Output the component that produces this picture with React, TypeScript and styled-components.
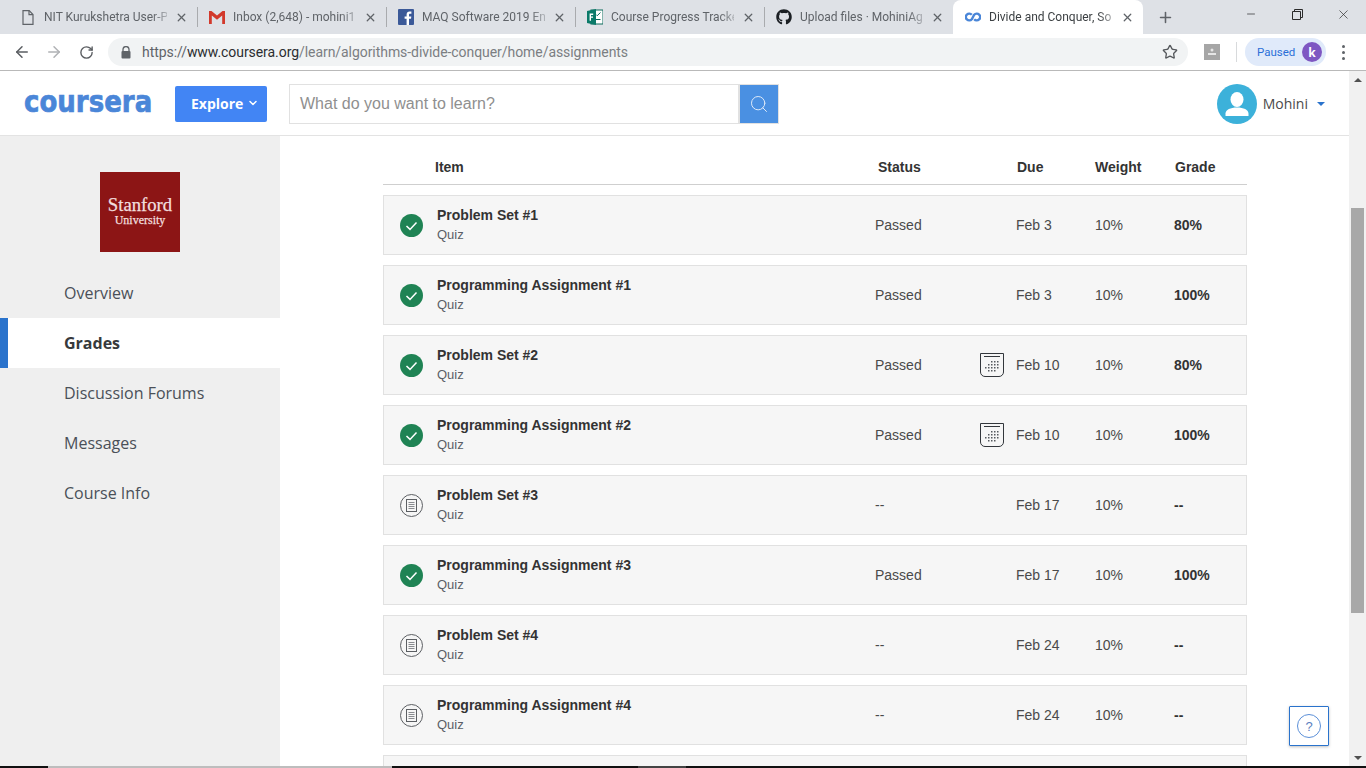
import { createGlobalStyle, styled } from 'styled-components';
import { ArrowLeft, ArrowRight, RotateCw, Star, X, Plus, Minus, Search, ChevronDown } from 'lucide-react';
import { FaGithub } from 'react-icons/fa';

const GlobalStyle = createGlobalStyle`
  html, body { margin: 0; padding: 0; height: 768px; overflow: hidden; background: #fff; }
  * { box-sizing: border-box; }
  #root { font-family: "Liberation Sans", Arial, sans-serif; }
`;

const Screen = styled.div`
  position: relative;
  width: 1366px;
  height: 768px;
  display: flex;
  flex-direction: column;
  overflow: hidden;
`;

/* browser chrome */
const TabStrip = styled.div`
  height: 34px;
  flex: none;
  background: #dee1e6;
  display: flex;
  padding-left: 8px;
`;
const Tab = styled.div<{ $active?: boolean; $last?: boolean }>`
  width: ${p => (p.$active ? 190 : 189)}px;
  height: 34px;
  flex: none;
  display: flex;
  align-items: center;
  padding: 0 9px 0 12px;
  background: ${p => (p.$active ? '#fff' : 'transparent')};
  border-radius: ${p => (p.$active ? '8px 8px 0 0' : '0')};
  position: relative;
  &::after {
    content: '';
    display: ${p => (p.$active || p.$last ? 'none' : 'block')};
    position: absolute;
    right: -1px;
    top: 7px;
    height: 20px;
    width: 1px;
    background: #a9abae;
  }
`;
const TabIcon = styled.span`
  width: 16px;
  height: 16px;
  flex: none;
  display: flex;
  align-items: center;
  justify-content: center;
  margin-right: 8px;
`;
const TabTitle = styled.span<{ $active?: boolean }>`
  flex: 1;
  min-width: 0;
  overflow: hidden;
  white-space: nowrap;
  font: 12px/16px Roboto, sans-serif;
  color: ${p => (p.$active ? '#3c4043' : '#5f6368')};
  -webkit-mask-image: linear-gradient(to right, #000 88%, rgba(0, 0, 0, 0.35) 100%);
  mask-image: linear-gradient(to right, #000 88%, rgba(0, 0, 0, 0.35) 100%);
`;
const TabClose = styled(X)`
  width: 13px;
  height: 13px;
  flex: none;
  margin-left: 8px;
  color: #5f6368;
  stroke-width: 2.4;
`;
const NewTab = styled.div`
  width: 44px;
  display: flex;
  align-items: center;
  justify-content: center;
  color: #5f6368;
`;
const WindowControls = styled.div`
  margin-left: auto;
  display: flex;
  align-items: flex-start;
  color: #2a2a2a;
`;
const WindowButton = styled.div`
  width: 46px;
  height: 30px;
  display: flex;
  align-items: center;
  justify-content: center;
  padding-bottom: 2px;
`;
const Toolbar = styled.div`
  height: 37px;
  flex: none;
  background: #fff;
  border-bottom: 1px solid #b9b9b9;
  display: flex;
  align-items: center;
`;
const NavButton = styled.div<{ $muted?: boolean }>`
  width: 32px;
  height: 28px;
  display: flex;
  align-items: center;
  justify-content: center;
  color: ${p => (p.$muted ? '#b0b2b5' : '#5a5d61')};
`;
const NavGroup = styled.div`
  display: flex;
  padding-left: 6px;
  width: 108px;
`;
const Omnibox = styled.div`
  width: 1080px;
  height: 28px;
  flex: none;
  border-radius: 14px;
  background: #f1f3f4;
  display: flex;
  align-items: center;
  padding: 0 10px 0 13px;
`;
const Url = styled.span`
  margin-left: 11px;
  font: 14px Roboto, sans-serif;
  letter-spacing: -0.06px;
  color: #7b7e82;
  white-space: nowrap;
  b { font-weight: 400; color: #2b2d30; }
  i { font-style: normal; color: #5f6368; }
`;
const StarIcon = styled(Star)`
  margin-left: auto;
  color: #55585c;
  width: 16px;
  height: 16px;
  stroke-width: 2;
`;
const ExtensionIcon = styled.div`
  width: 16px;
  height: 16px;
  margin-left: 16px;
  background: #a6a6a6;
  flex: none;
  display: flex;
  align-items: center;
  justify-content: center;
`;
const ToolbarDivider = styled.div`
  width: 1px;
  height: 20px;
  background: #d8dadc;
  margin-left: 16px;
  flex: none;
`;
const PausedPill = styled.div`
  margin-left: 8px;
  width: 81px;
  height: 28px;
  flex: none;
  border-radius: 14px;
  background: #e0eafa;
  display: flex;
  align-items: center;
  justify-content: space-between;
  padding: 0 4px 0 12px;
  font: 11.5px Roboto, sans-serif;
  color: #2a6fd8;
`;
const ProfileDot = styled.span`
  width: 20px;
  height: 20px;
  border-radius: 50%;
  background: #7e57c2;
  color: #fff;
  display: flex;
  align-items: center;
  justify-content: center;
  font: 700 12px "Open Sans", sans-serif;
`;
const KebabMenu = styled.div`
  margin-left: 16px;
  display: flex;
  flex-direction: column;
  gap: 3px;
  span { width: 3px; height: 3px; border-radius: 50%; background: #5f6368; }
`;

/* page */
const Viewport = styled.div`
  flex: 1;
  min-height: 0;
  display: flex;
`;
const Page = styled.div`
  width: 1349px;
  flex: none;
  display: flex;
  flex-direction: column;
  min-height: 0;
`;
const TopBar = styled.header`
  height: 65px;
  flex: none;
  background: #fff;
  border-bottom: 1px solid #e3e3e3;
  display: flex;
  align-items: center;
  padding: 2px 24px 0;
`;
const Logo = styled.div`
  width: 128px;
  height: 36px;
  flex: none;
  display: flex;
  align-items: center;
  font: 700 31px/36px "DejaVu Sans", sans-serif;
  color: #4a86d8;
  white-space: nowrap;
  -webkit-text-stroke: 0.7px #4a86d8;
  transform: translateY(-3px) scaleX(0.84);
  transform-origin: left center;
`;
const ExploreButton = styled.button`
  margin-left: 23px;
  width: 92px;
  height: 36px;
  flex: none;
  border: 0;
  border-radius: 2px;
  background: #4285f4;
  color: #fff;
  font: 700 14px "Open Sans", sans-serif;
  display: flex;
  align-items: center;
  gap: 4px;
  padding: 0 0 2px 16px;
`;
const SearchBox = styled.div`
  margin-left: 22px;
  width: 490px;
  height: 40px;
  flex: none;
  display: flex;
`;
const SearchPlaceholder = styled.div`
  flex: 1;
  display: flex;
  align-items: center;
  padding-left: 10px;
  font-size: 16px;
  color: #8f8f8f;
  border: 1px solid #e1e1e1;
`;
const SearchButton = styled.div`
  width: 40px;
  flex: none;
  background: #4a90e2;
  border: 1px solid #e1e1e1;
  display: flex;
  align-items: center;
  justify-content: center;
  color: #dfeaf8;
`;
const UserMenu = styled.div`
  margin-left: auto;
  display: flex;
  align-items: center;
`;
const Avatar = styled.div`
  width: 40px;
  height: 40px;
  border-radius: 50%;
  background: #3cb1da;
  overflow: hidden;
`;
const UserName = styled.span`
  margin-left: 6px;
  padding-bottom: 2px;
  font: 14px "Open Sans", sans-serif;
  color: #4a4a4a;
`;
const Caret = styled.span`
  margin-left: 9px;
  width: 0;
  height: 0;
  border-left: 4px solid transparent;
  border-right: 4px solid transparent;
  border-top: 4px solid #2a73cc;
`;
const Body = styled.div`
  flex: 1;
  min-height: 0;
  display: flex;
  overflow: hidden;
`;
const Sidebar = styled.aside`
  width: 280px;
  flex: none;
  background: #efefef;
  padding-top: 36px;
`;
const SchoolLogo = styled.div`
  width: 80px;
  height: 80px;
  margin: 0 auto 16px;
  background: #8c1515;
  color: #f2dfdf;
  font-family: "Liberation Serif", serif;
  display: flex;
  flex-direction: column;
  align-items: center;
  justify-content: center;
  padding-bottom: 3px;
  white-space: nowrap;
  -webkit-text-stroke: 0.25px #f2dfdf;
  strong { font-weight: 400; font-size: 18.7px; line-height: 19px; }
  span { font-size: 12px; line-height: 13px; }
`;
const NavItem = styled.div<{ $active?: boolean }>`
  height: 50px;
  display: flex;
  align-items: center;
  padding-left: ${p => (p.$active ? 56 : 64)}px;
  font: ${p => (p.$active ? 700 : 400)} 16px "Open Sans", sans-serif;
  color: ${p => (p.$active ? '#373a3c' : '#4a5058')};
  background: ${p => (p.$active ? '#fff' : 'transparent')};
  border-left: ${p => (p.$active ? '8px solid #2a73cc' : '0')};
`;
const Main = styled.main`
  flex: 1;
  padding: 14px 0 0 103px;
  background: #fff;
`;
const TableHead = styled.div`
  width: 864px;
  height: 35px;
  border-bottom: 1px solid #cfcfcf;
  display: grid;
  grid-template-columns: 443px 139px 78px 80px 1fr;
  align-items: center;
  padding-left: 52px;
  font-weight: 700;
  font-size: 14px;
  color: #333;
  margin-bottom: 10px;
`;
const Rows = styled.div`
  display: flex;
  flex-direction: column;
  gap: 10px;
  width: 864px;
`;
const Row = styled.div`
  height: 60px;
  flex: none;
  background: #f6f6f6;
  border: 1px solid #e1e1e1;
  display: grid;
  grid-template-columns: 37px 438px 141px 79px 79px 1fr;
  align-items: center;
  padding-left: 16px;
  font-size: 14px;
  color: #4a4a4a;
`;
const ItemText = styled.div`
  display: flex;
  flex-direction: column;
`;
const ItemTitle = styled.div`
  font-weight: 700;
  font-size: 14px;
  line-height: 18px;
  color: #333;
`;
const ItemKind = styled.div`
  font-size: 13px;
  line-height: 18px;
  margin-top: 2px;
  color: #5a5f66;
`;
const StatusCell = styled.div`
  display: flex;
  align-items: center;
  justify-content: space-between;
  padding-right: 12px;
`;
const GradeCell = styled.div`
  font-weight: 700;
  color: #333;
`;
const HelpButton = styled.div`
  position: absolute;
  left: 1289px;
  top: 706px;
  width: 40px;
  height: 40px;
  background: #fff;
  border: 1px solid #2a73cc;
  border-radius: 1px;
  box-shadow: 0 1px 3px rgba(0, 0, 0, 0.25);
  display: flex;
  align-items: center;
  justify-content: center;
`;
const HelpRing = styled.div`
  width: 24px;
  height: 24px;
  border: 1px solid #5b8fd8;
  border-radius: 50%;
  display: flex;
  align-items: center;
  justify-content: center;
  font-size: 13px;
  color: #5b7fc0;
`;

/* page scrollbar */
const Scrollbar = styled.div`
  width: 17px;
  flex: none;
  background: #f1f1f1;
  display: flex;
  flex-direction: column;
  align-items: center;
`;
const ScrollArrow = styled.div<{ $down?: boolean }>`
  height: 17px;
  width: 17px;
  flex: none;
  display: flex;
  align-items: center;
  justify-content: center;
  &::before {
    content: '';
    border-left: 4px solid transparent;
    border-right: 4px solid transparent;
    ${p => (p.$down ? 'border-top: 4px solid #505050;' : 'border-bottom: 4px solid #505050;')}
  }
`;
const ScrollThumb = styled.div`
  width: 13px;
  height: 405px;
  flex: none;
  margin-top: 120px;
  background: #a8a8a8;
`;
const ScrollSpacer = styled.div`
  flex: 1;
`;
const Taskbar = styled.div`
  height: 2px;
  flex: none;
  background: #111;
  display: flex;
`;
const TaskbarPart = styled.div<{ $w: number; $c: string }>`
  width: ${p => p.$w}px;
  flex: none;
  background: ${p => p.$c};
`;

const DocIcon = () => (
  <svg width="12" height="15" viewBox="0 0 12 15" fill="none" stroke="#5f6368" strokeWidth="1.2">
    <path d="M1 .7h6.2L11 4.5v9.8H1z" />
    <path d="M7 .7v4h4" />
  </svg>
);
const GmailIcon = () => (
  <svg width="16" height="13" viewBox="0 0 16 13">
    <path d="M0 0h2.5L8 4.6 13.5 0H16v13h-2.8V4.6L8 8.8 2.8 4.6V13H0z" fill="#d2392c" />
  </svg>
);
const FacebookIcon = () => (
  <svg width="16" height="16" viewBox="0 0 16 16">
    <rect width="16" height="16" rx="1" fill="#3b5998" />
    <path d="M11 16V9.8h2l.3-2.4H11V5.9c0-.7.2-1.2 1.2-1.2h1.2V2.6c-.3 0-1-.1-1.8-.1-1.8 0-3 1.1-3 3.1v1.8h-2v2.4h2V16z" fill="#fff" />
  </svg>
);
const FormsIcon = () => (
  <svg width="16" height="16" viewBox="0 0 16 16">
    <rect x="4" y="1" width="12" height="14" fill="#fff" stroke="#0b6a5b" />
    <path d="M9 5.500l1.200 1.200L13.500 3.500M9 10.500h4.500" stroke="#0b6a5b" fill="none" />
    <path d="M0 2l9-2v16l-9-2z" fill="#0b7a69" />
    <path d="M2.600 4.600h3.600v1.300H4v1.600h2v1.300H4v3H2.600z" fill="#fff" />
  </svg>
);
const CourseraIcon = () => (
  <svg width="16" height="10" viewBox="0 0 16 10" fill="none" stroke="#4a86d8" strokeWidth="2.400">
    <path d="M6.800 2.800A3.400 3.400 0 1 0 6.800 7.200L9.200 2.800a3.400 3.400 0 1 1 0 4.400" />
  </svg>
);
const LockIcon = () => (
  <svg width="10" height="13" viewBox="0 0 10 13">
    <path d="M2 5.200V3.600a3 3 0 0 1 6 0v1.600" fill="none" stroke="#5f6368" strokeWidth="1.300" />
    <rect x="0.500" y="5" width="9" height="7.500" rx="1" fill="#5f6368" />
  </svg>
);
const PersonIcon = () => (
  <svg width="40" height="40" viewBox="0 0 40 40">
    <ellipse cx="20" cy="15.500" rx="6.500" ry="7.500" fill="#fff" />
    <path d="M8.500 32v-2.500c0-3.800 5-6 11.500-6s11.500 2.200 11.500 6V32z" fill="#fff" />
  </svg>
);
const CheckBadge = () => (
  <svg width="23" height="23" viewBox="0 0 23 23">
    <circle cx="11.500" cy="11.500" r="11.500" fill="#1f8354" />
    <path d="M6.500 12l3.500 3.400 6.500-7" fill="none" stroke="#fff" strokeWidth="1.500" />
  </svg>
);
const ListBadge = () => (
  <svg width="23" height="23" viewBox="0 0 23 23" fill="none" stroke="#5c5f63">
    <circle cx="11.500" cy="11.500" r="11" />
    <rect x="6.500" y="5.500" width="10" height="12" />
    <path d="M8.500 8.500h6M8.500 10.500h6M8.500 12.500h6M8.500 14.500h6" stroke="#8a8c90" />
  </svg>
);
const calendarDots = [
  [11, 8], [14, 8], [17, 8],
  [8, 11], [11, 11], [14, 11], [17, 11],
  [5, 14], [8, 14], [11, 14], [14, 14], [17, 14],
  [8, 17], [11, 17], [14, 17],
];
const CalendarIcon = () => (
  <svg width="24" height="24" viewBox="0 0 24 24" fill="none" stroke="#33373c">
    <path d="M.5.500h23V19a4.500 4.500 0 0 1-4.500 4.500H5A4.500 4.500 0 0 1 .5 19z" />
    <path d="M4 3.500h16" />
    {calendarDots.map(([x, y]) => (
      <rect key={`${x}-${y}`} x={x} y={y} width="1.500" height="1.500" fill="#55595e" stroke="none" />
    ))}
  </svg>
);

type TabInfo = { title: string; icon: React.ReactNode; active?: boolean; last?: boolean };

const tabs: TabInfo[] = [
  { title: 'NIT Kurukshetra User-P', icon: <DocIcon /> },
  { title: 'Inbox (2,648) - mohini1', icon: <GmailIcon /> },
  { title: 'MAQ Software 2019 Eng', icon: <FacebookIcon /> },
  { title: 'Course Progress Tracker', icon: <FormsIcon /> },
  { title: 'Upload files · MohiniAg', icon: <FaGithub size={16} color="#1b1f23" />, last: true },
  { title: 'Divide and Conquer, So', icon: <CourseraIcon />, active: true },
];

type Assignment = {
  title: string;
  done: boolean;
  calendar?: boolean;
  due: string;
  grade: string;
};

const assignments: Assignment[] = [
  { title: 'Problem Set #1', done: true, due: 'Feb 3', grade: '80%' },
  { title: 'Programming Assignment #1', done: true, due: 'Feb 3', grade: '100%' },
  { title: 'Problem Set #2', done: true, calendar: true, due: 'Feb 10', grade: '80%' },
  { title: 'Programming Assignment #2', done: true, calendar: true, due: 'Feb 10', grade: '100%' },
  { title: 'Problem Set #3', done: false, due: 'Feb 17', grade: '--' },
  { title: 'Programming Assignment #3', done: true, due: 'Feb 17', grade: '100%' },
  { title: 'Problem Set #4', done: false, due: 'Feb 24', grade: '--' },
  { title: 'Programming Assignment #4', done: false, due: 'Feb 24', grade: '--' },
];

const navItems = ['Overview', 'Grades', 'Discussion Forums', 'Messages', 'Course Info'];

const App = () => (
  <Screen>
    <GlobalStyle />
    <TabStrip>
      {tabs.map(tab => (
        <Tab key={tab.title} $active={tab.active} $last={tab.last}>
          <TabIcon>{tab.icon}</TabIcon>
          <TabTitle $active={tab.active}>{tab.title}</TabTitle>
          <TabClose />
        </Tab>
      ))}
      <NewTab><Plus size={17} strokeWidth={2.2} /></NewTab>
      <WindowControls>
        <WindowButton><Minus size={12} strokeWidth={1.4} /></WindowButton>
        <WindowButton>
          <svg width="11" height="11" viewBox="0 0 11 11" fill="none" stroke="#2a2a2a">
            <path d="M.5 2.500h8v8h-8zM2.500 2.500v-2h8v8h-2" />
          </svg>
        </WindowButton>
        <WindowButton><X size={15} strokeWidth={1.1} /></WindowButton>
      </WindowControls>
    </TabStrip>
    <Toolbar>
      <NavGroup>
        <NavButton><ArrowLeft size={18} strokeWidth={2} /></NavButton>
        <NavButton $muted><ArrowRight size={18} strokeWidth={2} /></NavButton>
        <NavButton><RotateCw size={15} strokeWidth={2.2} /></NavButton>
      </NavGroup>
      <Omnibox>
        <LockIcon />
        <Url><i>https://</i><b>www.coursera.org</b>/learn/algorithms-divide-conquer/home/assignments</Url>
        <StarIcon />
      </Omnibox>
      <ExtensionIcon>
        <svg width="10" height="10" viewBox="0 0 10 10" fill="#e6e6e6">
          <circle cx="5" cy="3" r="1.500" /><rect x="1" y="6" width="8" height="2" />
        </svg>
      </ExtensionIcon>
      <ToolbarDivider />
      <PausedPill>Paused<ProfileDot>k</ProfileDot></PausedPill>
      <KebabMenu><span /><span /><span /></KebabMenu>
    </Toolbar>
    <Viewport>
      <Page>
        <TopBar>
          <Logo>coursera</Logo>
          <ExploreButton>Explore<ChevronDown size={12} strokeWidth={3} /></ExploreButton>
          <SearchBox>
            <SearchPlaceholder>What do you want to learn?</SearchPlaceholder>
            <SearchButton><Search size={20} strokeWidth={1.2} /></SearchButton>
          </SearchBox>
          <UserMenu>
            <Avatar><PersonIcon /></Avatar>
            <UserName>Mohini</UserName>
            <Caret />
          </UserMenu>
        </TopBar>
        <Body>
          <Sidebar>
            <SchoolLogo>
              <strong>Stanford</strong>
              <span>University</span>
            </SchoolLogo>
            {navItems.map(item => (
              <NavItem key={item} $active={item === 'Grades'}>{item}</NavItem>
            ))}
          </Sidebar>
          <Main>
            <TableHead>
              <span>Item</span>
              <span>Status</span>
              <span>Due</span>
              <span>Weight</span>
              <span>Grade</span>
            </TableHead>
            <Rows>
              {assignments.map(a => (
                <Row key={a.title}>
                  {a.done ? <CheckBadge /> : <ListBadge />}
                  <ItemText>
                    <ItemTitle>{a.title}</ItemTitle>
                    <ItemKind>Quiz</ItemKind>
                  </ItemText>
                  <StatusCell>
                    <span>{a.done ? 'Passed' : '--'}</span>
                    {a.calendar && <CalendarIcon />}
                  </StatusCell>
                  <span>{a.due}</span>
                  <span>10%</span>
                  <GradeCell>{a.grade}</GradeCell>
                </Row>
              ))}
              <Row />
            </Rows>
          </Main>
        </Body>
      </Page>
      <Scrollbar>
        <ScrollArrow />
        <ScrollThumb />
        <ScrollSpacer />
        <ScrollArrow $down />
      </Scrollbar>
    </Viewport>
    <Taskbar>
      <TaskbarPart $w={48} $c="#111" />
      <TaskbarPart $w={344} $c="#bdbdbd" />
      <TaskbarPart $w={246} $c="#111" />
      <TaskbarPart $w={48} $c="#444" />
    </Taskbar>
    <HelpButton><HelpRing>?</HelpRing></HelpButton>
  </Screen>
);

export default App;
